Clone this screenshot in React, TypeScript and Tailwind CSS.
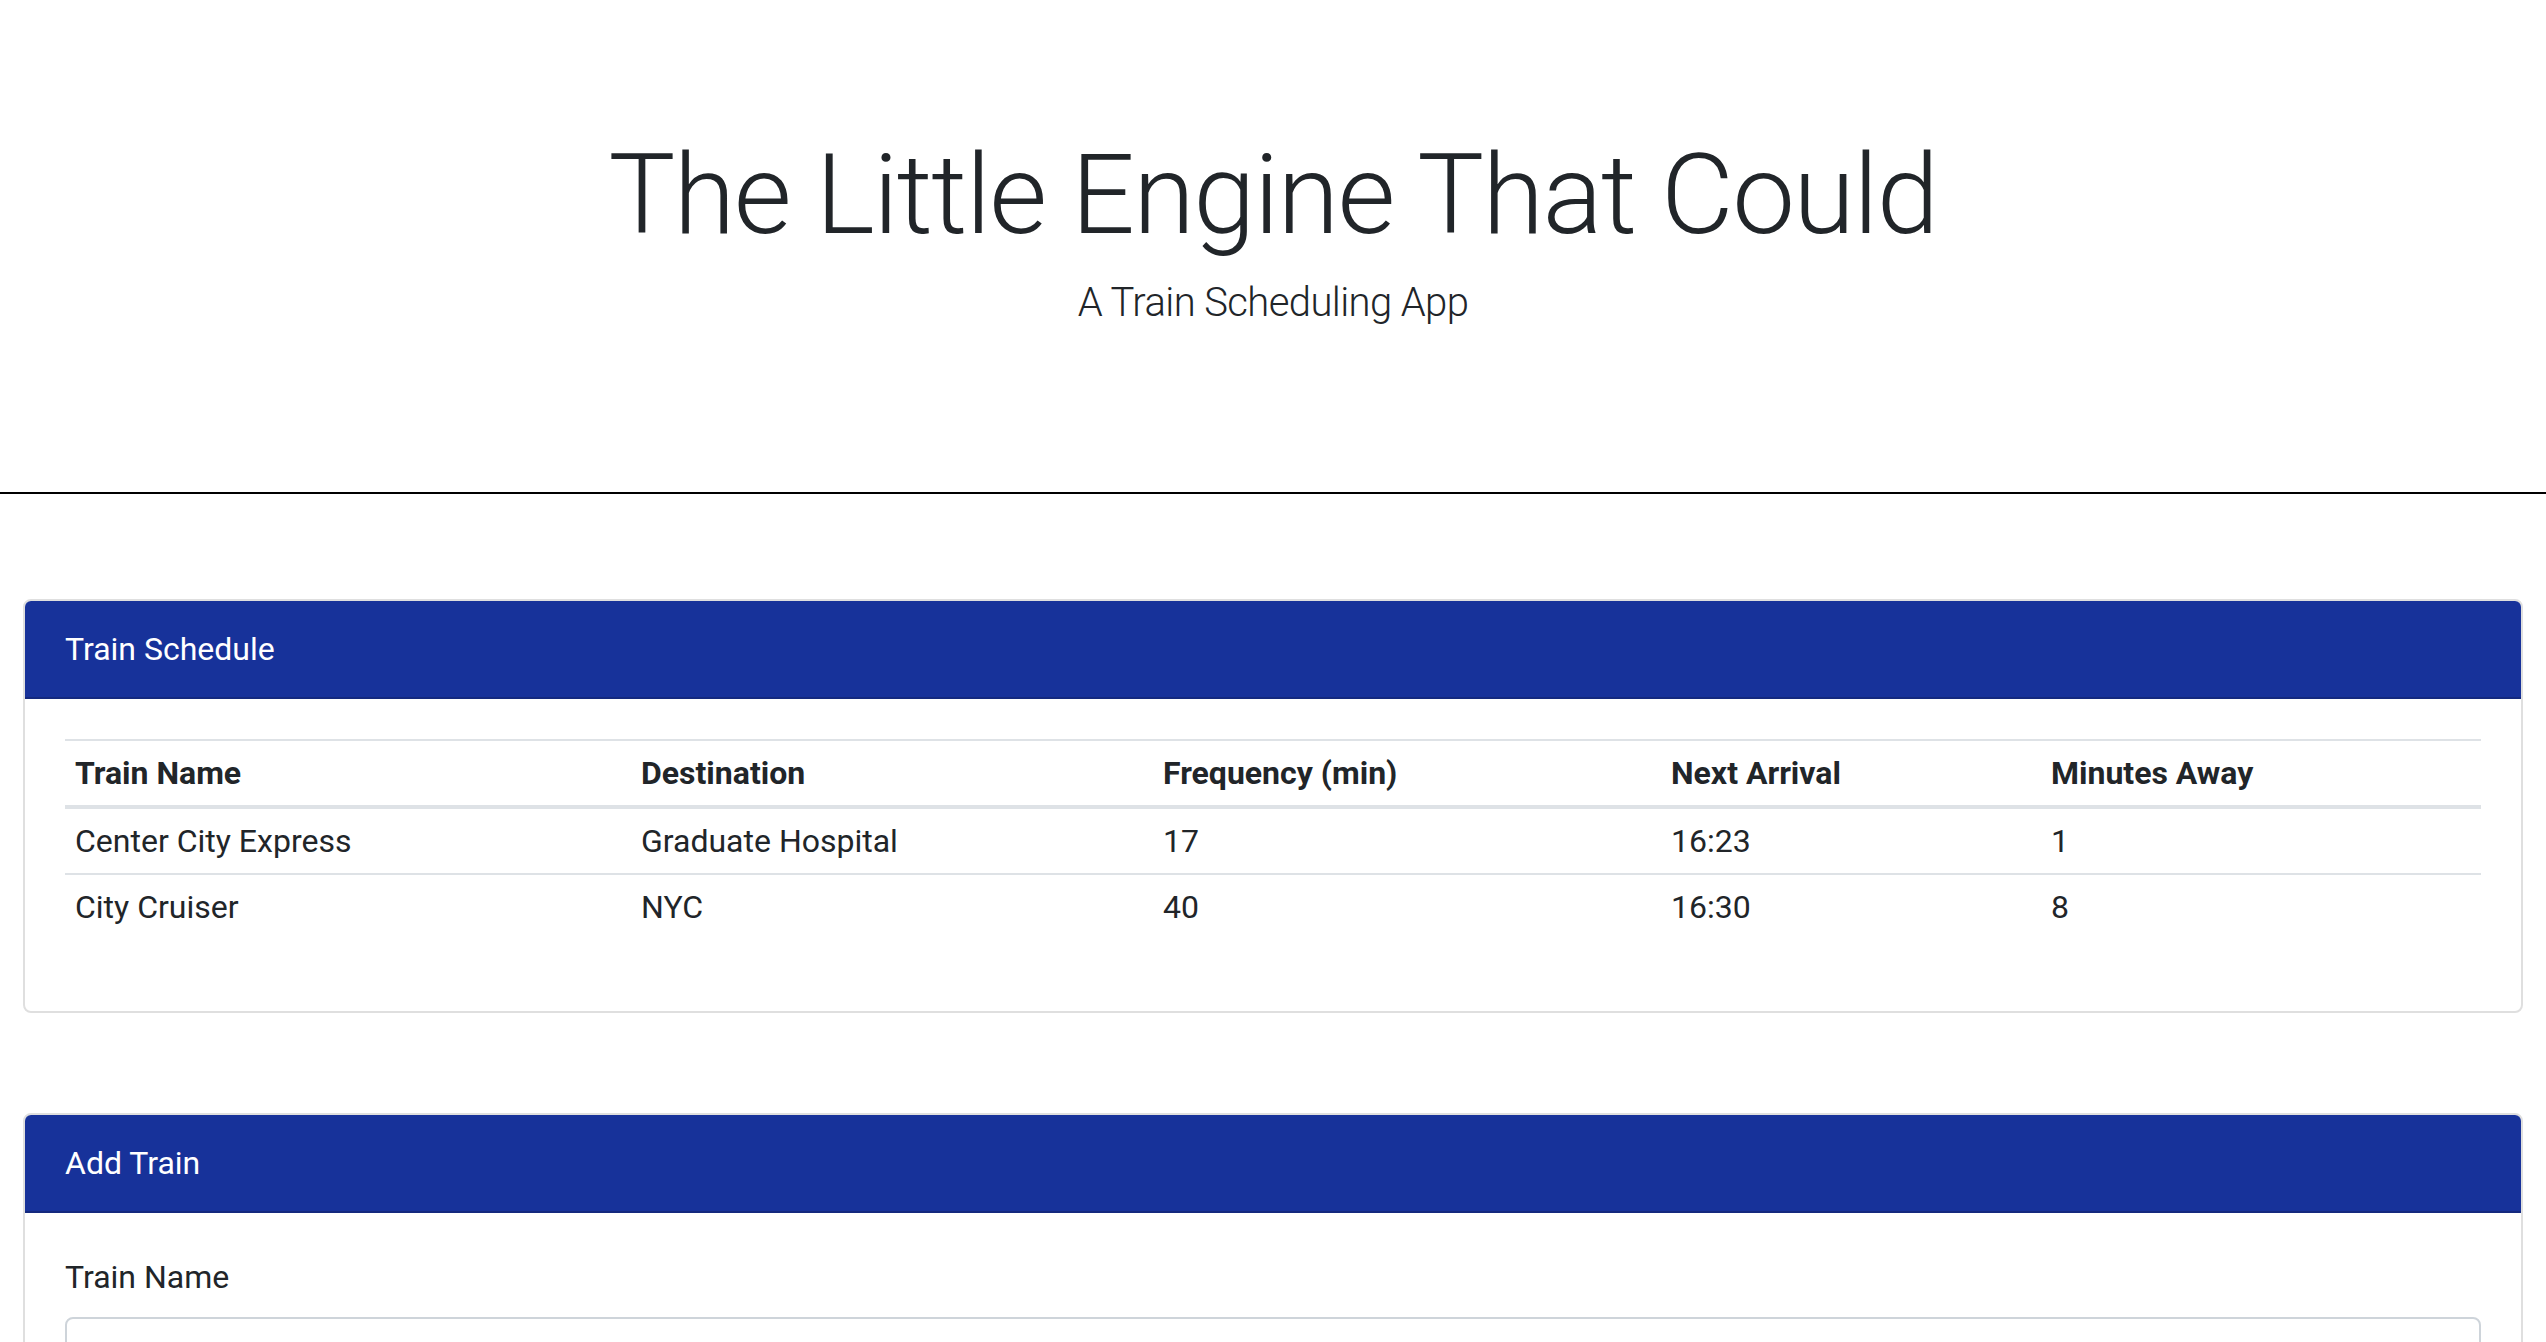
const trains = [
  { name: "Center City Express", destination: "Graduate Hospital", frequency: "17", next: "16:23", away: "1" },
  { name: "City Cruiser", destination: "NYC", frequency: "40", next: "16:30", away: "8" },
];

const headers = ["Train Name", "Destination", "Frequency (min)", "Next Arrival", "Minutes Away"];

function Card({ title, children }: { title: string; children: React.ReactNode }) {
  return (
    <div className="rounded-[8px] border-2 border-[#dfdfdf] bg-white overflow-hidden">
      <div className="bg-[#17329a] border-b-2 border-[#14297e] px-[40px] py-[24px] text-[32px] leading-[48px] text-white">
        {title}
      </div>
      <div className="p-[40px]">{children}</div>
    </div>
  );
}

export default function App() {
  return (
    <div className="min-h-screen bg-white text-[#212529] font-['Roboto',sans-serif]">
      <header className="pt-[128px] pb-[159px] text-center">
        <h1 className="text-[112px] leading-[134px] font-light tracking-[-1.6px]">The Little Engine That Could</h1>
        <p className="mt-[11px] text-[40px] leading-[60px] font-light tracking-[-0.6px]">A Train Scheduling App</p>
      </header>
      <hr className="border-0 h-[2px] bg-black" />

      <main className="px-[23px] pt-[105px] flex flex-col gap-[100px]">
        <Card title="Train Schedule">
          <table className="w-full border-collapse text-[32px] leading-[48px] mb-[32px]">
            <colgroup>
              <col className="w-[566px]" />
              <col className="w-[522px]" />
              <col className="w-[508px]" />
              <col className="w-[380px]" />
              <col />
            </colgroup>
            <thead>
              <tr className="border-t-2 border-b-4 border-[#dee2e6]">
                {headers.map((h) => (
                  <th key={h} className="text-left font-bold px-[10px] py-[8px]">{h}</th>
                ))}
              </tr>
            </thead>
            <tbody>
              {trains.map((t, i) => (
                <tr key={t.name} className={i > 0 ? "border-t-2 border-[#dee2e6]" : ""}>
                  <td className="px-[10px] py-[8px]">{t.name}</td>
                  <td className="px-[10px] py-[8px]">{t.destination}</td>
                  <td className="px-[10px] py-[8px]">{t.frequency}</td>
                  <td className="px-[10px] py-[8px]">{t.next}</td>
                  <td className="px-[10px] py-[8px]">{t.away}</td>
                </tr>
              ))}
            </tbody>
          </table>
        </Card>

        <Card title="Add Train">
          <label className="block text-[32px] leading-[48px] mb-[16px]">Train Name</label>
          <input className="block w-full h-[76px] rounded-[8px] border-2 border-[#ced4da] px-[24px] text-[32px]" />
        </Card>
      </main>
    </div>
  );
}
